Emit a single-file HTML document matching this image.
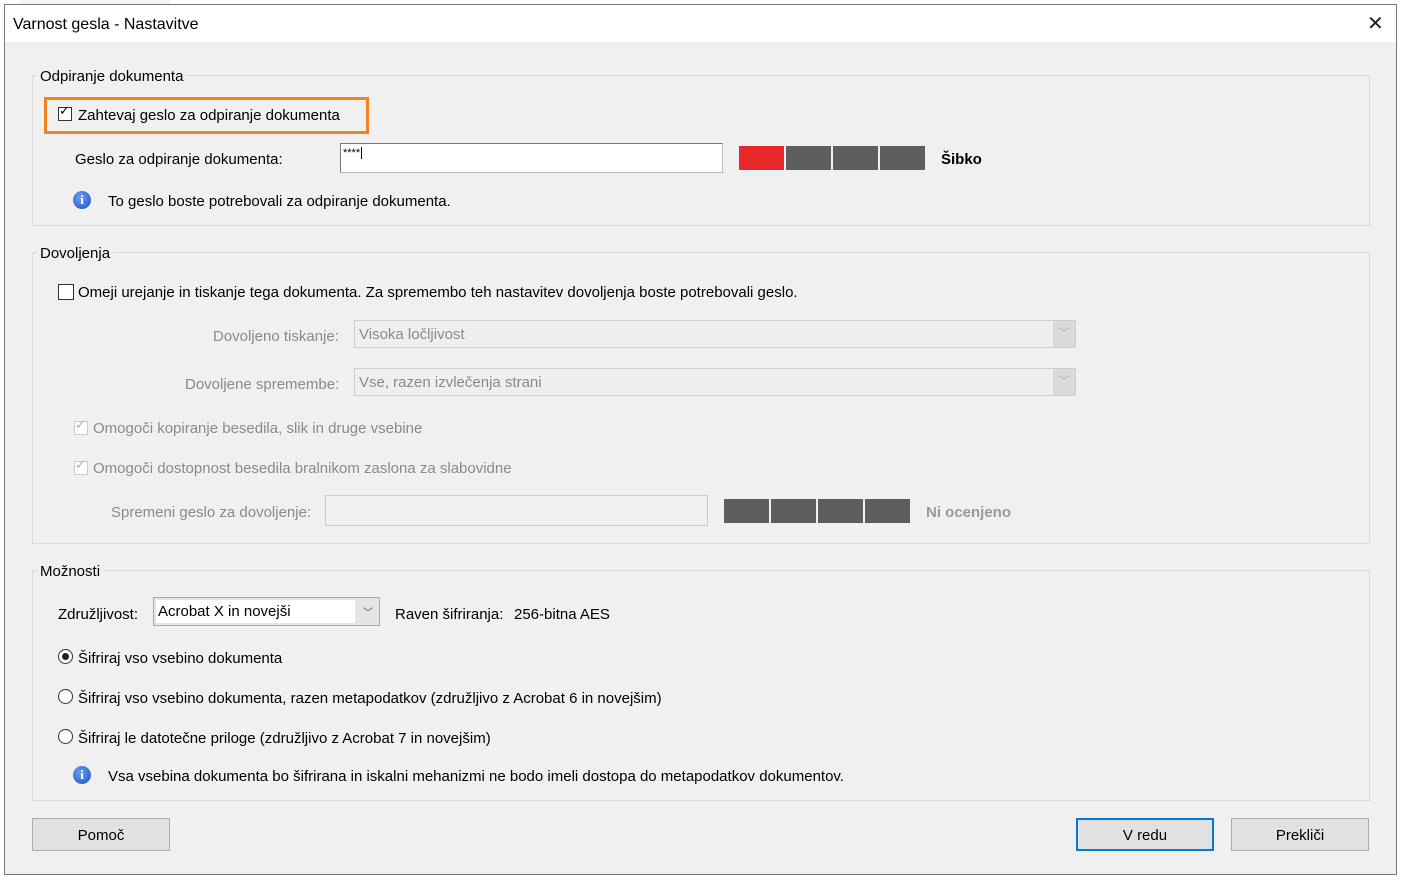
<!DOCTYPE html>
<html><head><meta charset="utf-8"><style>
body{margin:0;width:1403px;height:880px;background:#fff;position:relative;overflow:hidden;font-family:"Liberation Sans",sans-serif;font-size:15px;color:#000}
.a{position:absolute}
.t{margin-top:2px}
.dlg{left:4px;top:4px;width:1393px;height:871px;background:#f0f0f0;border:1px solid #777;box-sizing:border-box}
.tb{left:5px;top:5px;width:1391px;height:37px;background:#fff}
.grp{position:absolute;border:1px solid #dcdcdc;box-sizing:border-box}
.lg{position:absolute;background:#f0f0f0;padding:0 3px;margin-top:2px}
.cb{position:absolute;width:14px;height:14px;border:1px solid #333;background:#fff;box-sizing:border-box}
.g{color:#8a8a8a}
.bar{position:absolute;height:24px;width:45px;background:#5e5e5e}
.btn{position:absolute;width:138px;height:33px;border:1px solid #adadad;background:#e1e1e1;box-sizing:border-box;text-align:center;line-height:33px}
.rad{position:absolute;width:15px;height:15px;border:1px solid #333;border-radius:50%;background:#fff;box-sizing:border-box}
.info{position:absolute;width:18px;height:18px;border-radius:50%;background:radial-gradient(circle at 40% 35%,#6d9ff0,#1a4fc0);color:#fff;font:bold 13px "Liberation Serif",serif;text-align:center;line-height:18px}
</style></head><body>
<div class="a" style="left:0;top:0;width:4px;height:880px;background:#fff"></div>
<div class="a" style="left:20px;top:0;width:150px;height:4px;background:#f4f4f4"></div>
<div class="a dlg"></div>
<div class="a tb"></div>
<div class="a t" style="left:13px;top:14px;font-size:16px">Varnost gesla - Nastavitve</div>
<div class="a" style="left:1367px;top:11px;font-size:20px;color:#222">✕</div>

<div class="grp" style="left:32px;top:75px;width:1338px;height:151px"></div>
<div class="lg" style="left:37px;top:66px">Odpiranje dokumenta</div>
<div class="a" style="left:44px;top:97px;width:325px;height:37px;border:3px solid #f58220;box-sizing:border-box"></div>
<div class="cb" style="left:58px;top:107px"></div><div class="a" style="left:59px;top:103px;font-size:13px">✓</div>
<div class="a t" style="left:78px;top:105px">Zahtevaj geslo za odpiranje dokumenta</div>
<div class="a t" style="left:75px;top:149px">Geslo za odpiranje dokumenta:</div>
<div class="a" style="left:340px;top:143px;width:383px;height:30px;background:#fff;border:1px solid #bbb;border-left-color:#777;border-top-color:#777;box-sizing:border-box;font-size:11px;padding:3px 2px">****<span style="border-left:1px solid #000;margin-left:1px"></span></div>
<div class="bar" style="left:739px;top:146px;background:#e8292a"></div>
<div class="bar" style="left:786px;top:146px"></div>
<div class="bar" style="left:833px;top:146px"></div>
<div class="bar" style="left:880px;top:146px"></div>
<div class="a t" style="left:941px;top:149px;font-weight:bold">Šibko</div>
<div class="info" style="left:73px;top:191px">i</div>
<div class="a t" style="left:108px;top:191px">To geslo boste potrebovali za odpiranje dokumenta.</div>

<div class="grp" style="left:32px;top:252px;width:1338px;height:292px"></div>
<div class="lg" style="left:37px;top:243px">Dovoljenja</div>
<div class="cb" style="left:58px;top:284px;width:16px;height:16px"></div>
<div class="a t" style="left:78px;top:282px">Omeji urejanje in tiskanje tega dokumenta. Za spremembo teh nastavitev dovoljenja boste potrebovali geslo.</div>
<div class="a g t" style="left:213px;top:326px">Dovoljeno tiskanje:</div>
<div class="a" style="left:354px;top:320px;width:722px;height:28px;background:#efefef;border:1px solid #ccc;box-sizing:border-box"><span class="g" style="position:absolute;left:4px;top:5px">Visoka ločljivost</span><div style="position:absolute;right:0;top:0;width:22px;height:26px;background:#dadada;color:#aaa;text-align:center;font-size:10px;line-height:26px">﹀</div></div>
<div class="a g t" style="left:185px;top:374px">Dovoljene spremembe:</div>
<div class="a" style="left:354px;top:368px;width:722px;height:28px;background:#efefef;border:1px solid #ccc;box-sizing:border-box"><span class="g" style="position:absolute;left:4px;top:5px">Vse, razen izvlečenja strani</span><div style="position:absolute;right:0;top:0;width:22px;height:26px;background:#dadada;color:#aaa;text-align:center;font-size:10px;line-height:26px">﹀</div></div>
<div class="cb" style="left:74px;top:421px;border-color:#ccc"></div><div class="a" style="left:75px;top:417px;font-size:13px;color:#aaa">✓</div>
<div class="a g t" style="left:93px;top:418px">Omogoči kopiranje besedila, slik in druge vsebine</div>
<div class="cb" style="left:74px;top:461px;border-color:#ccc"></div><div class="a" style="left:75px;top:457px;font-size:13px;color:#aaa">✓</div>
<div class="a g t" style="left:93px;top:458px">Omogoči dostopnost besedila bralnikom zaslona za slabovidne</div>
<div class="a g t" style="left:111px;top:502px">Spremeni geslo za dovoljenje:</div>
<div class="a" style="left:325px;top:495px;width:383px;height:31px;border:1px solid #ccc;box-sizing:border-box"></div>
<div class="bar" style="left:724px;top:499px"></div>
<div class="bar" style="left:771px;top:499px"></div>
<div class="bar" style="left:818px;top:499px"></div>
<div class="bar" style="left:865px;top:499px"></div>
<div class="a g t" style="left:926px;top:502px;font-weight:bold;color:#999">Ni ocenjeno</div>

<div class="grp" style="left:32px;top:570px;width:1338px;height:231px"></div>
<div class="lg" style="left:37px;top:561px">Možnosti</div>
<div class="a t" style="left:58px;top:604px">Združljivost:</div>
<div class="a" style="left:153px;top:597px;width:227px;height:29px;background:#e5e5e5;border:1px solid #aaa;box-sizing:border-box"><div style="position:absolute;left:2px;top:2px;width:199px;height:23px;background:#fff"></div><span style="position:absolute;left:4px;top:5px">Acrobat X in novejši</span><span style="position:absolute;right:6px;top:6px;font-size:10px;color:#444">﹀</span></div>
<div class="a t" style="left:395px;top:604px">Raven šifriranja:</div>
<div class="a t" style="left:514px;top:604px">256-bitna AES</div>
<div class="rad" style="left:58px;top:649px"></div><div class="a" style="left:62px;top:653px;width:7px;height:7px;border-radius:50%;background:#222"></div>
<div class="a t" style="left:78px;top:648px">Šifriraj vso vsebino dokumenta</div>
<div class="rad" style="left:58px;top:689px"></div>
<div class="a t" style="left:78px;top:688px">Šifriraj vso vsebino dokumenta, razen metapodatkov (združljivo z Acrobat 6 in novejšim)</div>
<div class="rad" style="left:58px;top:729px"></div>
<div class="a t" style="left:78px;top:728px">Šifriraj le datotečne priloge (združljivo z Acrobat 7 in novejšim)</div>
<div class="info" style="left:73px;top:766px">i</div>
<div class="a t" style="left:108px;top:766px">Vsa vsebina dokumenta bo šifrirana in iskalni mehanizmi ne bodo imeli dostopa do metapodatkov dokumentov.</div>

<div class="btn" style="left:32px;top:818px">Pomoč</div>
<div class="btn" style="left:1076px;top:818px;border:2px solid #0078d7;line-height:31px">V redu</div>
<div class="btn" style="left:1231px;top:818px">Prekliči</div>
</body></html>
